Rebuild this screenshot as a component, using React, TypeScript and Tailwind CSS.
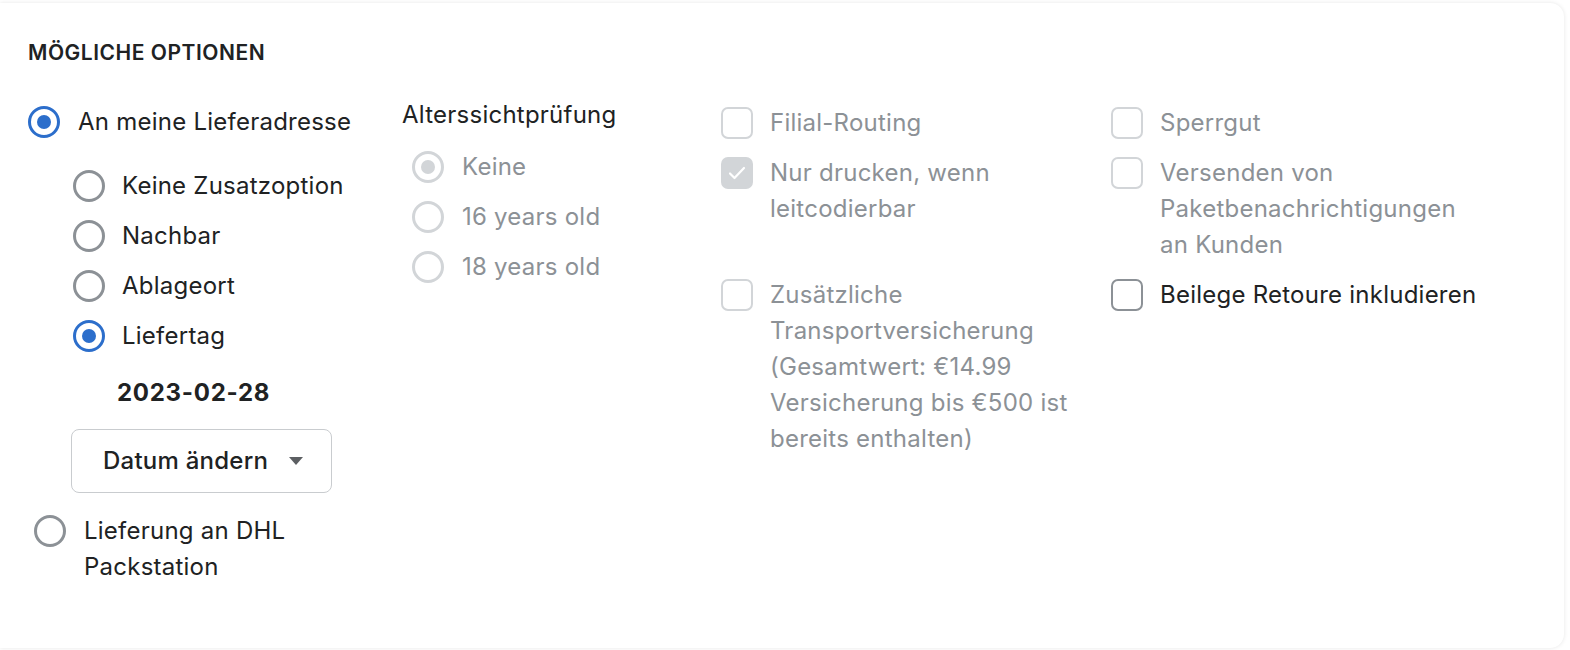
import type { ReactNode } from "react";

const dark = "text-[#202223]";
const muted = "text-[#8c9196]";

function Radio({ checked = false, disabled = false }: { checked?: boolean; disabled?: boolean }) {
  const ring = disabled ? "border-[#d2d5d8]" : checked ? "border-[#2c6ecb]" : "border-[#8c9196]";
  const dot = disabled ? "bg-[#d2d5d8]" : "bg-[#2c6ecb]";
  return (
    <span
      className={`mt-[2px] flex h-[32px] w-[32px] shrink-0 items-center justify-center rounded-full border-[3px] bg-white ${ring}`}
    >
      {checked && <span className={`h-[14px] w-[14px] rounded-full ${dot}`} />}
    </span>
  );
}

function Checkbox({ checked = false, disabled = false }: { checked?: boolean; disabled?: boolean }) {
  if (checked) {
    return (
      <span className="mt-[2px] flex h-[32px] w-[32px] shrink-0 items-center justify-center rounded-[7px] bg-[#d2d5d8]">
        <svg width="20" height="16" viewBox="0 0 20 16" fill="none">
          <path d="M3 8.5l4.5 4.5L17 3" stroke="white" strokeWidth="2.2" strokeLinecap="round" strokeLinejoin="round" />
        </svg>
      </span>
    );
  }
  return (
    <span
      className={`mt-[2px] h-[32px] w-[32px] shrink-0 rounded-[7px] border-[2.5px] bg-white ${
        disabled ? "border-[#d2d5d8]" : "border-[#8c9196]"
      }`}
    />
  );
}

function Option({
  control,
  disabled = false,
  gap = "gap-[18px]",
  children,
}: {
  control: ReactNode;
  disabled?: boolean;
  gap?: string;
  children: ReactNode;
}) {
  return (
    <label className={`flex items-start ${gap}`}>
      {control}
      <span className={`whitespace-nowrap ${disabled ? muted : dark}`}>{children}</span>
    </label>
  );
}

export default function App() {
  return (
    <div className="min-h-screen bg-white pt-[3px] font-['Inter','Noto_Sans',sans-serif] text-[24px] leading-[36px] tracking-[0.01em]">
      <section className="h-[645px] w-[1564px] rounded-r-[14px] bg-white pl-[28px] pt-[36px] shadow-[0_0_4px_rgba(0,0,0,0.1)]">
        <h2 className={`text-[21px] font-semibold leading-[28px] tracking-[0.025em] ${dark}`}>
          MÖGLICHE OPTIONEN
        </h2>

        <div className="mt-[30px] flex items-start">
          {/* delivery column */}
          <div className="w-[374px] pt-[7px]">
            <Option control={<Radio checked />}>An meine Lieferadresse</Option>

            <div className="ml-[45px] mt-[28px] flex flex-col gap-[14px]">
              <Option control={<Radio />} gap="gap-[17px]">Keine Zusatzoption</Option>
              <Option control={<Radio />} gap="gap-[17px]">Nachbar</Option>
              <Option control={<Radio />} gap="gap-[17px]">Ablageort</Option>
              <Option control={<Radio checked />} gap="gap-[17px]">Liefertag</Option>
            </div>

            <p className={`ml-[89px] mt-[21px] font-bold tracking-[0.03em] ${dark}`}>2023-02-28</p>

            <button
              type="button"
              className={`ml-[43px] mt-[18px] flex h-[64px] w-[261px] items-center gap-[21px] rounded-[8px] border border-[#c9cccf] bg-white pl-[31px] font-medium ${dark}`}
            >
              Datum ändern
              <svg width="14" height="8" viewBox="0 0 14 8">
                <path d="M0 0h14L7 8z" fill="#5c5f62" />
              </svg>
            </button>

            <div className="ml-[6px] mt-[20px]">
              <Option control={<Radio />}>
                Lieferung an DHL
                <br />
                Packstation
              </Option>
            </div>
          </div>

          {/* age check */}
          <div className="w-[319px]">
            <p className={dark}>Alterssichtprüfung</p>
            <div className="ml-[10px] mt-[16px] flex flex-col gap-[14px]">
              <Option control={<Radio checked disabled />} disabled>Keine</Option>
              <Option control={<Radio disabled />} disabled>16 years old</Option>
              <Option control={<Radio disabled />} disabled>18 years old</Option>
            </div>
          </div>

          {/* extra services */}
          <div className="grid grid-cols-[390px_1fr] content-start gap-y-[14px] pt-[8px]">
            <Option control={<Checkbox disabled />} disabled gap="gap-[17px]">Filial-Routing</Option>
            <Option control={<Checkbox disabled />} disabled gap="gap-[17px]">Sperrgut</Option>

            <Option control={<Checkbox checked disabled />} disabled gap="gap-[17px]">
              Nur drucken, wenn
              <br />
              leitcodierbar
            </Option>
            <Option control={<Checkbox disabled />} disabled gap="gap-[17px]">
              Versenden von
              <br />
              Paketbenachrichtigungen
              <br />
              an Kunden
            </Option>

            <Option control={<Checkbox disabled />} disabled gap="gap-[17px]">
              Zusätzliche
              <br />
              Transportversicherung
              <br />
              (Gesamtwert: €14.99
              <br />
              Versicherung bis €500 ist
              <br />
              bereits enthalten)
            </Option>
            <Option control={<Checkbox />} gap="gap-[17px]">Beilege Retoure inkludieren</Option>
          </div>
        </div>
      </section>
    </div>
  );
}
